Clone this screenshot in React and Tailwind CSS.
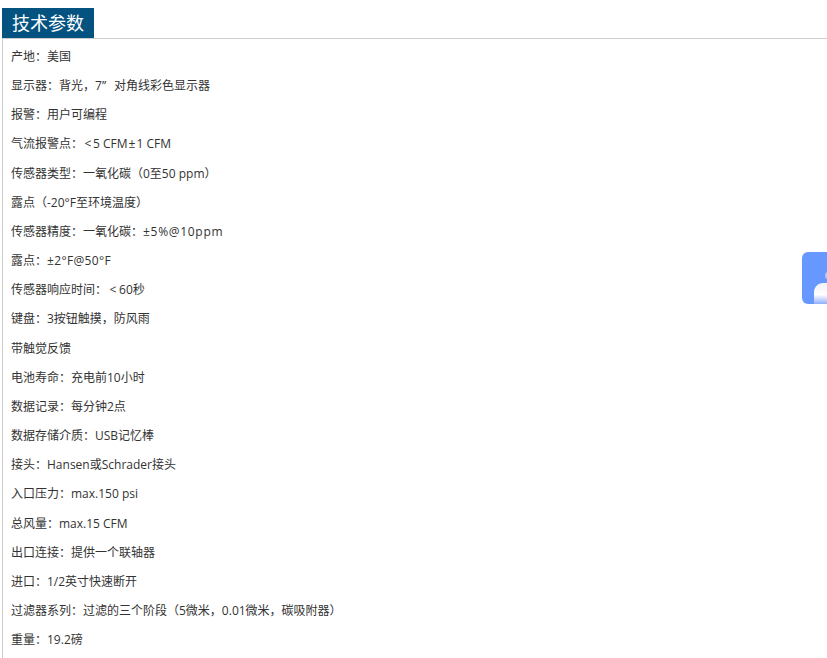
import React from 'react';

const specs = [
  '产地：美国',
  <>显示器：背光，7<span className="inline-block w-3 leading-none">”</span>对角线彩色显示器</>,
  '报警：用户可编程',
  <>气流报警点：<span className="inline-block w-[10px] text-center">&lt;</span>5 CFM<span className="inline-block w-[9px] text-center">±</span>1 CFM</>,
  '传感器类型：一氧化碳（0至50 ppm）',
  '露点（-20°F至环境温度）',
  <>传感器精度：一氧化碳：<span className="tracking-[0.7px]">±5%@10ppm</span></>,
  <>露点：<span className="tracking-[0.35px]">±2°F@50°F</span></>,
  <>传感器响应时间：<span className="inline-block w-3 text-center">&lt;</span>60秒</>,
  '键盘：3按钮触摸，防风雨',
  '带触觉反馈',
  '电池寿命：充电前10小时',
  '数据记录：每分钟2点',
  '数据存储介质：USB记忆棒',
  '接头：Hansen或Schrader接头',
  '入口压力：max.150 psi',
  '总风量：max.15 CFM',
  '出口连接：提供一个联轴器',
  '进口：1/2英寸快速断开',
  '过滤器系列：过滤的三个阶段（5微米，0.01微米，碳吸附器）',
  '重量：19.2磅',
];

export default function App() {
  return (
    <div lang="zh-CN" className="flex h-[658px] flex-col overflow-hidden bg-white pt-2 pl-0.5 font-['Open_Sans','Noto_Sans_CJK_SC',sans-serif] text-[#333] [text-spacing-trim:space-all]">
      {/* Title tab */}
      <div className="border-b border-[#ccc]">
        <h2 className="flex h-[30px] w-[92px] items-center justify-center bg-[#04527f] text-lg font-normal text-white">
          技术参数
        </h2>
      </div>

      {/* Spec list */}
      <div className="flex-1 border-l border-[#ccc] pt-[3px] pl-2">
        {specs.map((line, i) => (
          <p key={i} className="h-[29.17px] text-xs leading-[29px]">{line}</p>
        ))}
      </div>

      {/* Floating service button */}
      <div className="fixed top-[252px] right-0 h-[52px] w-[25px] overflow-hidden rounded-l-md bg-[#6698ff]">
        <svg width="25" height="52" viewBox="0 0 25 52" className="block">
          <defs>
            <linearGradient id="agentBody" x1="0" y1="0" x2="0" y2="1">
              <stop offset="0" stopColor="#f1f0f8" />
              <stop offset="0.55" stopColor="#ffffff" />
              <stop offset="1" stopColor="#8fb0fd" />
            </linearGradient>
          </defs>
          <ellipse cx="26" cy="23.5" rx="3" ry="3.5" fill="#b9c8f5" />
          <path d="M12 52V40c0-5 4-9 9-9h4v21z" fill="url(#agentBody)" />
        </svg>
      </div>
    </div>
  );
}
